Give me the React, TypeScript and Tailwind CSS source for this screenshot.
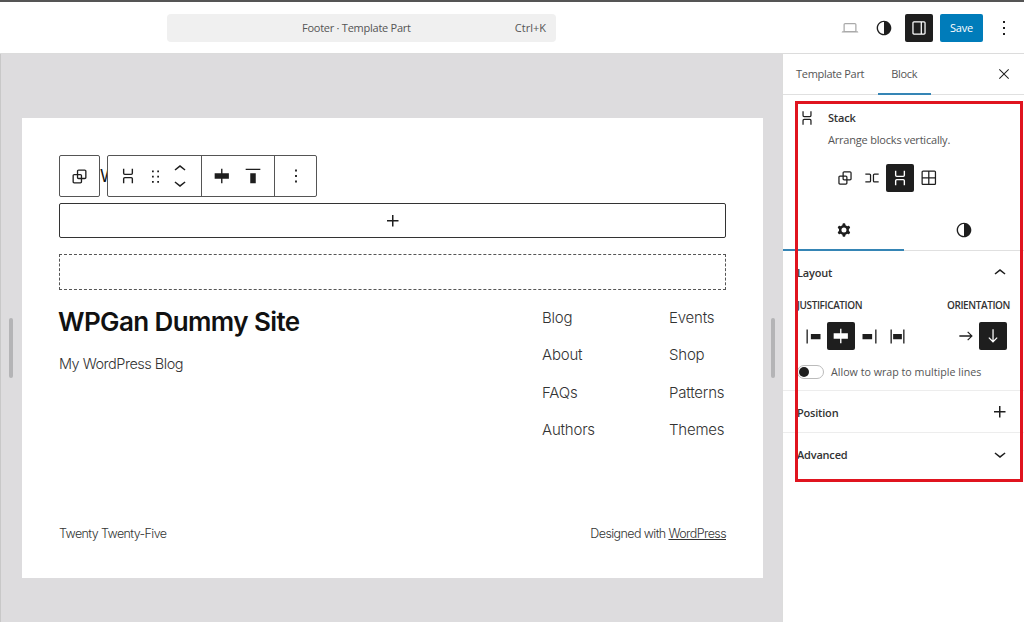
const paths = {
  stack: "M17.5 4v5a2 2 0 0 1-2 2h-7a2 2 0 0 1-2-2V4H8v5a.5.5 0 0 0 .5.5h7A.5.5 0 0 0 16 9V4h1.5Zm0 16v-5a2 2 0 0 0-2-2h-7a2 2 0 0 0-2 2v5H8v-5a.5.5 0 0 1 .5-.5h7a.5.5 0 0 1 .5.5v5h1.5Z",
  row: "M4 6.5h5a2 2 0 0 1 2 2v7a2 2 0 0 1-2 2H4V16h5a.5.5 0 0 0 .5-.5v-7A.5.5 0 0 0 9 8H4V6.5Zm16 0h-5a2 2 0 0 0-2 2v7a2 2 0 0 0 2 2h5V16h-5a.5.5 0 0 1-.5-.5v-7A.5.5 0 0 1 15 8h5V6.5Z",
  group: "M18 4h-7c-1.1 0-2 .9-2 2v3H6c-1.1 0-2 .9-2 2v7c0 1.1.9 2 2 2h7c1.1 0 2-.9 2-2v-3h3c1.1 0 2-.9 2-2V6c0-1.1-.9-2-2-2zm-4.5 14c0 .3-.2.5-.5.5H6c-.3 0-.5-.2-.5-.5v-7c0-.3.2-.5.5-.5h3V13c0 1.1.9 2 2 2h2.5v3zm0-4.5H11c-.3 0-.5-.2-.5-.5v-2.5H13c.3 0 .5.2.5.5v2.5zm5-.5c0 .3-.2.5-.5.5h-3V11c0-1.1-.9-2-2-2h-2.5V6c0-.3.2-.5.5-.5h7c.3 0 .5.2.5.5v7z",
  grid: "m3 5c0-1.10457.89543-2 2-2h13.5c1.1046 0 2 .89543 2 2v13.5c0 1.1046-.8954 2-2 2h-13.5c-1.10457 0-2-.8954-2-2zm2-.5h6v6.5h-6.5v-6c0-.27614.22386-.5.5-.5zm-.5 8v6c0 .2761.22386.5.5.5h6v-6.5zm8 0v6.5h6c.2761 0 .5-.2239.5-.5v-6zm0-8v6.5h6.5v-6c0-.27614-.2239-.5-.5-.5z",
  cog: "M10.289 4.836A1 1 0 0 1 11.275 4h1.306a1 1 0 0 1 .987.836l.244 1.466c.787.26 1.503.679 2.108 1.218l1.393-.522a1 1 0 0 1 1.216.437l.653 1.13a1 1 0 0 1-.23 1.273l-1.148.944a6.025 6.025 0 0 1 0 2.435l1.149.946a1 1 0 0 1 .23 1.272l-.653 1.13a1 1 0 0 1-1.216.437l-1.394-.522c-.605.54-1.32.958-2.108 1.218l-.244 1.466a1 1 0 0 1-.987.836h-1.306a1 1 0 0 1-.986-.836l-.244-1.466a5.995 5.995 0 0 1-2.108-1.218l-1.394.522a1 1 0 0 1-1.217-.436l-.653-1.131a1 1 0 0 1 .23-1.272l1.149-.946a6.026 6.026 0 0 1 0-2.435l-1.148-.944a1 1 0 0 1-.23-1.272l.653-1.131a1 1 0 0 1 1.217-.437l1.393.522a5.994 5.994 0 0 1 2.108-1.218l.244-1.466ZM14.929 12a3 3 0 1 1-6 0 3 3 0 0 1 6 0Z",
  drag: "M8 7h2V5H8v2zm0 6h2v-2H8v2zm0 6h2v-2H8v2zm6-14v2h2V5h-2zm0 8h2v-2h-2v2zm0 6h2v-2h-2v2z",
  more: "M13 19h-2v-2h2v2zm0-6h-2v-2h2v2zm0-6h-2V5h2v2z",
  justifyCenter: "M12.5 15v5H11v-5H4V9h7V4h1.5v5h7v6h-7Z",
  justifyLeft: "M9 9v6h11V9H9zM4 20h1.5V4H4v16z",
  justifyRight: "M4 15h11V9H4v6zM18.5 4v16H20V4h-1.5z",
  justifyBetween: "M7 9v6h10V9H7zM4 20h1.5V4H4v16zM18.5 4v16H20V4h-1.5z",
  alignTop: "M9 20h6V9H9v11zM4 4v1.5h16V4H4z",
  arrowRight: "m14.5 6.5-1 1 3.7 3.7H4v1.6h13.2l-3.7 3.7 1 1 5.6-5.5z",
  arrowDown: "m16.5 13.5-3.7 3.7V4h-1.5v13.2l-3.8-3.7-1 1 5.5 5.6 5.5-5.6z",
  styles: "M12 4c-4.4 0-8 3.6-8 8s3.6 8 8 8 8-3.6 8-8-3.6-8-8-8zm0 14.5c-3.6 0-6.5-2.9-6.5-6.5S8.4 5.5 12 5.5v13z",
  drawer: "M18 4H6c-1.1 0-2 .9-2 2v12c0 1.1.9 2 2 2h12c1.1 0 2-.9 2-2V6c0-1.1-.9-2-2-2zm-4 14.5H6c-.3 0-.5-.2-.5-.5V6c0-.3.2-.5.5-.5h8v13zm4.5-.5c0 .3-.2.5-.5.5h-2.5v-13H18c.3 0 .5.2.5.5v12z",
  desktop: "M20.5 16h-.7V8c0-1.1-.9-2-2-2H6.2c-1.1 0-2 .9-2 2v8h-.7c-.8 0-1.5.7-1.5 1.5h20c0-.8-.7-1.5-1.5-1.5zM5.7 8c0-.3.2-.5.5-.5h11.6c.3 0 .5.2.5.5v7.6H5.7V8z",
  close: "m13.06 12 6.47-6.47-1.06-1.06L12 10.94 5.53 4.47 4.47 5.53 10.94 12l-6.47 6.47 1.06 1.06L12 13.06l6.47 6.47 1.06-1.06L13.06 12Z",
  chevronUp: "M6.5 12.4L12 8l5.5 4.4-.9 1.2L12 10l-4.5 3.6-1-1.2z",
  chevronDown: "M17.5 11.6L12 16l-5.5-4.4.9-1.2L12 14l4.6-3.6 1 1.2z",
  plus: "M11 12.5V17.5H12.5V12.5H17.5V11H12.5V6H11V11H6V12.5H11Z",
};

function Icon({ name, size = 24, className = "" }: { name: keyof typeof paths; size?: number; className?: string }) {
  return (
    <svg width={size} height={size} viewBox="0 0 24 24" fill="currentColor" className={`shrink-0 ${className}`}>
      <path d={paths[name]} fillRule="evenodd" clipRule="evenodd" />
    </svg>
  );
}

function Header() {
  return (
    <header className="flex h-[54px] shrink-0 items-center border-t-2 border-b border-t-[#555] border-b-[#dcdcdc] bg-white pt-[1px]">
      <div className="ml-[167px] flex h-[28px] w-[389px] items-center rounded bg-[#f0f0f0] pr-[10px] text-[11px] tracking-[-0.25px] text-[#555]">
        <span className="flex-1 pl-[135px]">Footer · Template Part</span>
        <span className="tracking-[0px]">Ctrl+K</span>
      </div>
      <div className="ml-auto flex items-center pr-[8px] text-[#1e1e1e]">
        <Icon name="desktop" size={20} className="mr-[13px] text-[#aaa]" />
        <Icon name="styles" size={22} className="mr-[10px]" />
        <div className="mr-[7px] flex h-[28px] w-[28px] items-center justify-center rounded-[2px] bg-[#1e1e1e] text-white">
          <Icon name="drawer" size={20} />
        </div>
        <div className="mr-[9px] flex h-[28px] w-[43px] items-center justify-center rounded-[2px] bg-[#007cba] text-[11px] tracking-[-0.2px] text-white">Save</div>
        <Icon name="more" />
      </div>
    </header>
  );
}

function Toolbar() {
  return (
    <div className="absolute left-[37px] top-[37px] flex gap-[7px] text-[#1e1e1e]">
      <div className="flex h-[42px] w-[41px] items-center justify-center rounded-[2px] border border-[#555] bg-white">
        <Icon name="group" size={21} />
      </div>
      <div className="flex h-[42px] w-[210px] rounded-[2px] border border-[#555] bg-white">
        <div className="flex w-[94px] items-center border-r border-[#555] pl-[9px]">
          <Icon name="stack" size={22} />
          <Icon name="drag" size={21} className="ml-[6px]" />
          <div className="ml-[2px] flex flex-col">
            <Icon name="chevronUp" className="-mb-[5px]" />
            <Icon name="chevronDown" className="-mt-[5px]" />
          </div>
        </div>
        <div className="flex w-[73px] items-center border-r border-[#555] pl-[9px]">
          <Icon name="justifyCenter" size={22} />
          <Icon name="alignTop" size={22} className="ml-[9px]" />
        </div>
        <div className="flex flex-1 items-center justify-center">
          <Icon name="more" size={22} />
        </div>
      </div>
    </div>
  );
}

const navLeft = ["Blog", "About", "FAQs", "Authors"];
const navRight = ["Events", "Shop", "Patterns", "Themes"];

function Frame() {
  return (
    <div className="relative ml-[21px] mt-[64px] h-[460px] w-[741px] bg-white px-[37px] pt-[85px] font-['Inter',sans-serif] text-[#111]">
      <div className="absolute left-[78px] top-[46px] text-[17px] font-normal leading-[24px]">W</div>
      <Toolbar />
      <div className="flex h-[35px] items-center justify-center rounded-[2px] border border-[#333] text-[#1e1e1e]">
        <Icon name="plus" />
      </div>
      <div className="mt-[16px] h-[36px] border border-dashed border-[#555]" />
      <div className="mt-[14px] flex justify-between">
        <div>
          <div className="-ml-[1px] text-[26px] font-semibold leading-[36px] tracking-[-0.6px] text-[#111]">WPGan Dummy Site</div>
          <div className="mt-[14px] text-[14.5px] font-light leading-[20px] tracking-[-0.5px] text-[#333]">My WordPress Blog</div>
        </div>
        <div className="-mt-[5px] flex text-[15px] font-light leading-[37.3px] tracking-[-0.2px] text-[#333]">
          <div className="w-[127px]">
            {navLeft.map((item) => (
              <div key={item}>{item}</div>
            ))}
          </div>
          <div className="w-[57px]">
            {navRight.map((item) => (
              <div key={item} className="whitespace-nowrap">{item}</div>
            ))}
          </div>
        </div>
      </div>
      <div className="mt-[77px] flex justify-between text-[12.5px] font-light leading-[18px] tracking-[-0.6px] text-[#333]">
        <span>Twenty Twenty-Five</span>
        <span>
          Designed with <span className="underline">WordPress</span>
        </span>
      </div>
    </div>
  );
}

function Canvas() {
  return (
    <div className="relative flex-1 border-l border-[#c8c8c8] bg-[#dddcde]">
      <div className="absolute left-[8px] top-[264px] h-[60px] w-[4px] rounded bg-[#b4b4b6]" />
      <div className="absolute left-[770px] top-[264px] h-[60px] w-[4px] rounded bg-[#b4b4b6]" />
      <Frame />
    </div>
  );
}

function PanelRow({ title, icon }: { title: string; icon: keyof typeof paths }) {
  return (
    <div className="flex h-[42px] items-center justify-between border-t border-[#ededed] pl-[14px] pr-[12px] pt-[3px]">
      <span className="text-[11px] font-semibold tracking-[-0.2px] text-[#333]">{title}</span>
      <Icon name={icon} className="-mt-[2px]" />
    </div>
  );
}

function Sidebar() {
  return (
    <aside className="relative w-[242px] shrink-0 border-l border-[#dcdcdc] bg-white text-[#1e1e1e]">
      <div className="flex h-[41px] items-center border-b border-[#e0e0e0] pl-[13px] pr-[12px] text-[11px] tracking-[-0.3px] text-[#555]">
        <span>Template Part</span>
        <span className="relative ml-[27px] flex h-[40px] items-center">
          Block
          <span className="absolute -left-[13px] -right-[14px] -bottom-[1px] h-[2px] bg-[#3585b5]" />
        </span>
        <Icon name="close" size={16} className="ml-auto text-[#1e1e1e]" />
      </div>

      <div className="flex pl-[14px] pt-[14px]">
        <Icon name="stack" size={20} className="-mt-[1px]" />
        <div className="ml-[11px] tracking-[-0.2px]">
          <div className="text-[11px] font-semibold leading-[18px] text-[#333]">Stack</div>
          <div className="mt-[4px] text-[11px] leading-[18px] text-[#555]">Arrange blocks vertically.</div>
        </div>
      </div>

      <div className="ml-[49px] mt-[15px] flex h-[28px] items-center">
        <div className="flex w-[26px] justify-center"><Icon name="group" size={20} /></div>
        <div className="flex w-[28px] justify-center"><Icon name="row" size={20} /></div>
        <div className="flex h-[28px] w-[28px] items-center justify-center rounded-[2px] bg-[#1e1e1e] text-white"><Icon name="stack" size={22} /></div>
        <div className="flex w-[30px] justify-center"><Icon name="grid" size={20} /></div>
      </div>

      <div className="mt-[13px] flex h-[46px] border-b border-[#e0e0e0] pt-[4px]">
        <div className="relative flex w-[121px] items-center justify-center">
          <Icon name="cog" size={20} />
          <span className="absolute inset-x-0 -bottom-[1px] h-[2px] bg-[#3585b5]" />
        </div>
        <div className="flex flex-1 items-center justify-center">
          <Icon name="styles" size={22} />
        </div>
      </div>

      <div className="h-[139px] pl-[14px] pr-[12px]">
        <div className="flex h-[44px] items-center justify-between">
          <span className="text-[11px] font-semibold tracking-[-0.2px] text-[#333]">Layout</span>
          <Icon name="chevronUp" />
        </div>
        <div className="mt-[2px] flex justify-between pr-[2px] text-[10px] font-semibold uppercase leading-[16px] tracking-[-0.4px] text-[#333]">
          <span>Justification</span>
          <span>Orientation</span>
        </div>
        <div className="mt-[9px] flex h-[28px] items-center justify-between pr-[5px]">
          <div className="flex items-center pl-[6px]">
            <Icon name="justifyLeft" size={21} />
            <div className="ml-[3px] flex h-[28px] w-[28px] items-center justify-center rounded-[2px] bg-[#1e1e1e] text-white">
              <Icon name="justifyCenter" size={22} />
            </div>
            <Icon name="justifyRight" size={21} className="ml-[4px]" />
            <Icon name="justifyBetween" size={21} className="ml-[7px]" />
          </div>
          <div className="flex items-center">
            <Icon name="arrowRight" size={20} />
            <div className="ml-[3px] flex h-[28px] w-[28px] items-center justify-center rounded-[2px] bg-[#1e1e1e] text-white">
              <Icon name="arrowDown" size={20} />
            </div>
          </div>
        </div>
        <div className="mt-[14px] flex items-center">
          <div className="flex h-[14px] w-[27px] items-center rounded-full border border-[#bbb] pl-[1px]">
            <span className="h-[10px] w-[10px] rounded-full bg-[#1e1e1e]" />
          </div>
          <span className="ml-[7px] text-[10.7px] text-[#555]">Allow to wrap to multiple lines</span>
        </div>
      </div>

      <PanelRow title="Position" icon="plus" />
      <PanelRow title="Advanced" icon="chevronDown" />

      <div className="pointer-events-none absolute left-[12px] top-[47px] h-[381px] w-[228px] border-[3px] border-[#e0141f]" />
    </aside>
  );
}

export default function App() {
  return (
    <div className="flex h-[626px] w-[1024px] flex-col overflow-hidden bg-white font-['Open_Sans',sans-serif]">
      <Header />
      <div className="flex h-[568px] shrink-0">
        <Canvas />
        <Sidebar />
      </div>
    </div>
  );
}
